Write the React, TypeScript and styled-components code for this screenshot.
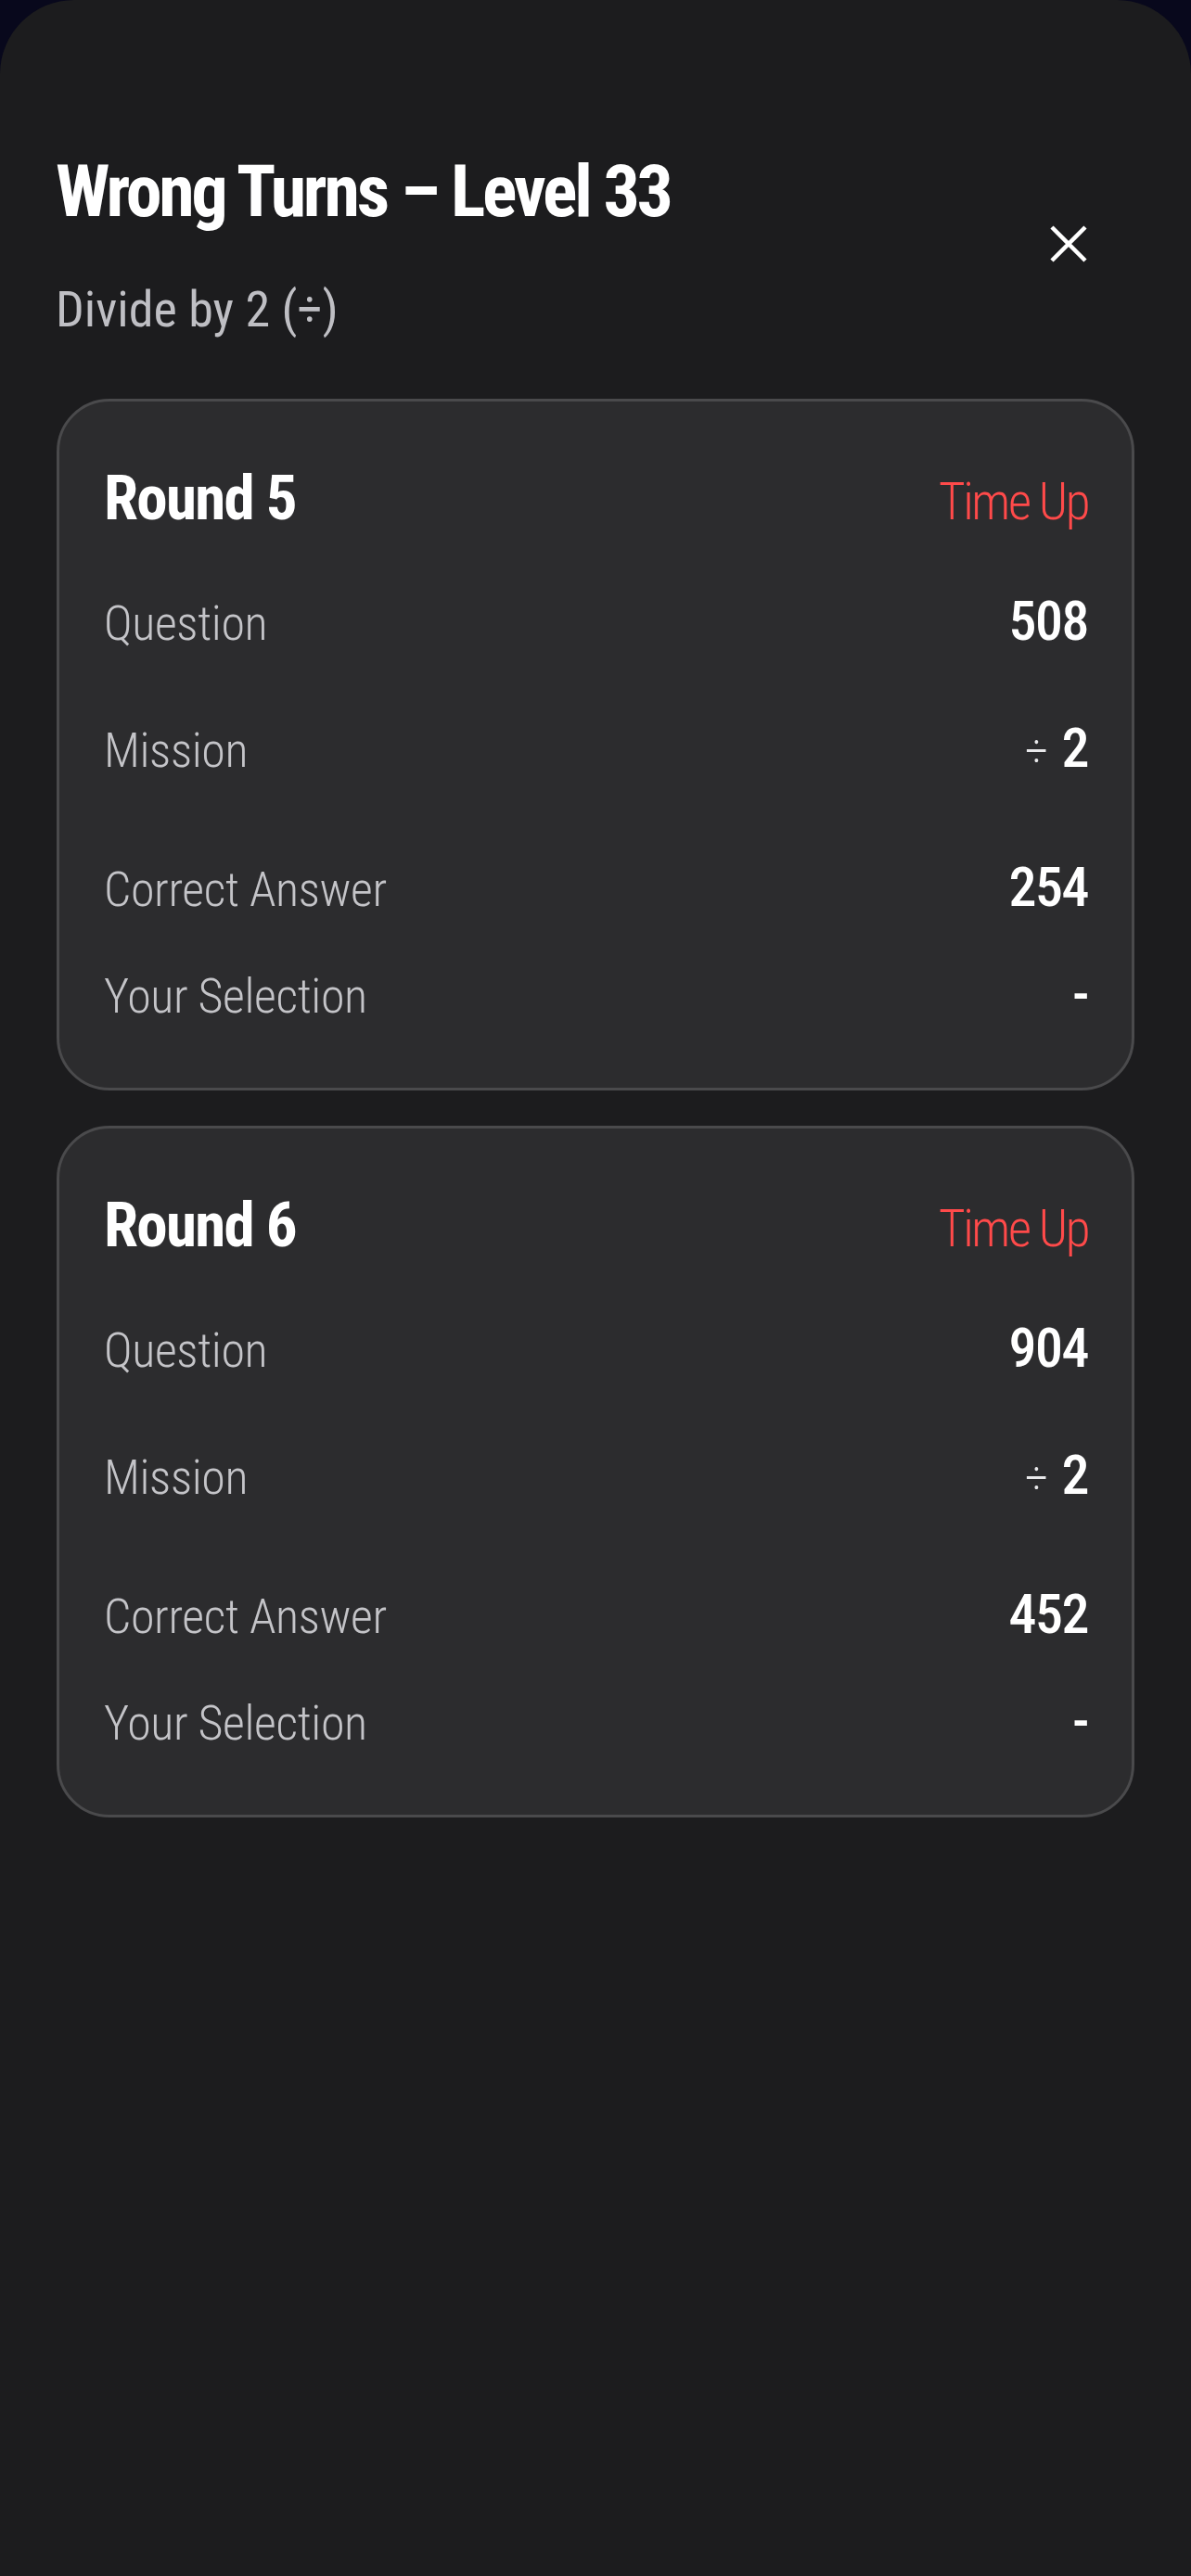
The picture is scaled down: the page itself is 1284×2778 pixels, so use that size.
import React from "react";
import styled, { createGlobalStyle } from "styled-components";

const GlobalStyle = createGlobalStyle`
  html, body {
    margin: 0;
    padding: 0;
    background: #08081c;
  }
  #root {
    min-height: 2778px;
    display: flex;
    flex-direction: column;
  }
`;

const Sheet = styled.div`
  flex: 1;
  min-height: 2778px;
  box-sizing: border-box;
  background: #1c1c1e;
  border-radius: 80px 80px 0 0;
  padding: 160px 61px 0 60px;
  font-family: "Roboto Condensed", Roboto, "Liberation Sans", sans-serif;
  font-stretch: condensed;
  display: flex;
  flex-direction: column;
`;

const Header = styled.header`
  display: flex;
  align-items: center;
  justify-content: space-between;
  padding-right: 51px;
`;

const HeaderText = styled.div`
  display: flex;
  flex-direction: column;
  gap: 48px;
`;

const Title = styled.h1`
  margin: 0;
  font-size: 78px;
  line-height: 94px;
  font-weight: 700;
  color: #ffffff;
  letter-spacing: -3.2px;
`;

const Subtitle = styled.p`
  margin: 0;
  font-size: 54px;
  line-height: 64px;
  font-weight: 400;
  color: #bfbfc4;
`;

const CloseButton = styled.button`
  width: 40px;
  height: 40px;
  padding: 0;
  border: none;
  background: transparent;
  display: flex;
  align-items: center;
  justify-content: center;
  cursor: pointer;
`;

const CardList = styled.div`
  margin-top: 64px;
  display: flex;
  flex-direction: column;
  gap: 38px;
  margin-left: 1px;
`;

const Card = styled.section`
  box-sizing: border-box;
  background: #2c2c2e;
  border: 3px solid #4a4a4c;
  border-radius: 57px;
  padding: 64px 47px 65px 48px;
  display: flex;
  flex-direction: column;
`;

const CardHead = styled.div`
  display: flex;
  align-items: baseline;
  justify-content: space-between;
  height: 80px;
`;

const RoundTitle = styled.h2`
  margin: 0;
  font-size: 67px;
  line-height: 80px;
  font-weight: 700;
  color: #ffffff;
  letter-spacing: -1.7px;
`;

const Status = styled.span`
  font-size: 55px;
  line-height: 80px;
  font-weight: 300;
  color: #ff4a4a;
  letter-spacing: -2.4px;
`;

const Row = styled.div<{ $space: number }>`
  display: flex;
  align-items: baseline;
  justify-content: space-between;
  height: 72px;
  margin-top: ${(p) => p.$space}px;
`;

const Label = styled.span`
  font-size: 52px;
  line-height: 72px;
  font-weight: 300;
  color: #c4c4c8;
  letter-spacing: -0.4px;
`;

const Value = styled.span`
  font-size: 60px;
  line-height: 72px;
  font-weight: 500;
  color: #ffffff;
  letter-spacing: -1.5px;
`;

const Op = styled.span`
  font-weight: 300;
  font-size: 50px;
  margin-right: 16px;
  color: #e8e8ea;
`;

type Round = {
  round: number;
  question: number;
  answer: number;
  selection: string;
};

const rounds: Round[] = [
  { round: 5, question: 508, answer: 254, selection: "-" },
  { round: 6, question: 904, answer: 452, selection: "-" },
];

function CloseIcon() {
  return (
    <svg width="40" height="40" viewBox="0 0 40 40" aria-hidden="true">
      <path d="M2 2 L38 38 M38 2 L2 38" stroke="#ffffff" strokeWidth="4.5" strokeLinecap="butt" />
    </svg>
  );
}

function RoundCard({ r }: { r: Round }) {
  return (
    <Card>
      <CardHead>
        <RoundTitle>Round {r.round}</RoundTitle>
        <Status>Time Up</Status>
      </CardHead>
      <Row $space={57}>
        <Label>Question</Label>
        <Value>{r.question}</Value>
      </Row>
      <Row $space={65}>
        <Label>Mission</Label>
        <Value>
          <Op>÷</Op>2
        </Value>
      </Row>
      <Row $space={78}>
        <Label>Correct Answer</Label>
        <Value>{r.answer}</Value>
      </Row>
      <Row $space={43}>
        <Label>Your Selection</Label>
        <Value>{r.selection}</Value>
      </Row>
    </Card>
  );
}

export default function App() {
  return (
    <>
      <GlobalStyle />
      <Sheet>
        <Header>
          <HeaderText>
            <Title>Wrong Turns – Level 33</Title>
            <Subtitle>Divide by 2 (÷)</Subtitle>
          </HeaderText>
          <CloseButton aria-label="Close">
            <CloseIcon />
          </CloseButton>
        </Header>
        <CardList>
          {rounds.map((r) => (
            <RoundCard key={r.round} r={r} />
          ))}
        </CardList>
      </Sheet>
    </>
  );
}
